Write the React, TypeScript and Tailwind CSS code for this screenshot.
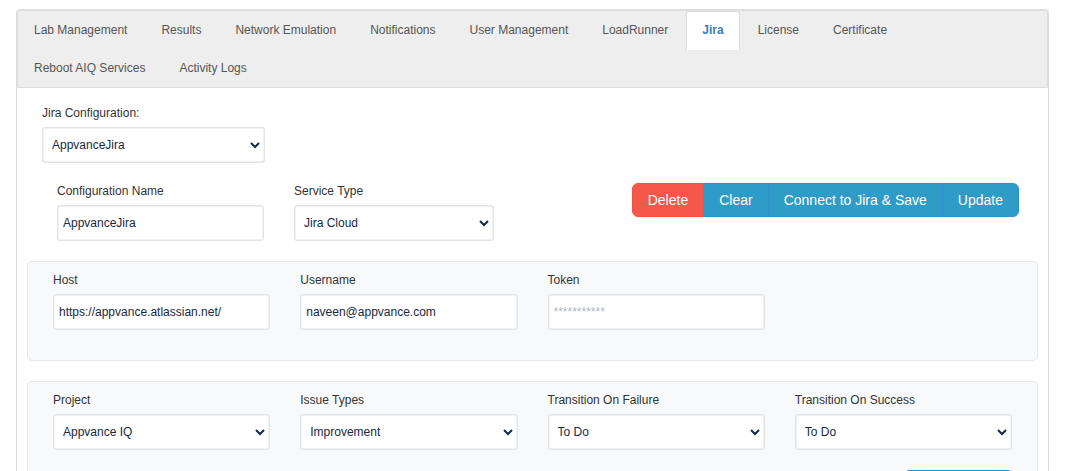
import { useId, type ReactNode } from "react";
import { clsx } from "clsx";

const tabs = [
  "Lab Management",
  "Results",
  "Network Emulation",
  "Notifications",
  "User Management",
  "LoadRunner",
  "Jira",
  "License",
  "Certificate",
  "Reboot AIQ Services",
  "Activity Logs",
];

const controlClass =
  "block h-9 w-full rounded-[3px] border-2 border-[#f1f2f2] bg-white px-1 text-xs text-[#17293f] outline-1 -outline-offset-1 outline-[#e3e4e5] placeholder:text-[#b3b8c2]";

interface FieldProps {
  label: string;
  className?: string;
}

interface TextFieldProps extends FieldProps {
  value?: string;
  placeholder?: string;
  type?: string;
}

function TextField({ label, value, placeholder, type = "text", className }: TextFieldProps) {
  const id = useId();

  return (
    <div className={className}>
      <label htmlFor={id} className="mb-1 block leading-5">
        {label}
      </label>
      <input
        id={id}
        type={type}
        defaultValue={value}
        placeholder={placeholder}
        className={controlClass}
      />
    </div>
  );
}

interface SelectFieldProps extends FieldProps {
  options: string[];
}

function SelectField({ label, options, className }: SelectFieldProps) {
  const id = useId();

  return (
    <div className={className}>
      <label htmlFor={id} className="mb-1 block leading-5">
        {label}
      </label>
      <select id={id} className={controlClass}>
        {options.map((option) => (
          <option key={option}>{option}</option>
        ))}
      </select>
    </div>
  );
}

function Panel({ children }: { children: ReactNode }) {
  return (
    <section className="mt-5 rounded-[5px] border border-[#e6e8ea] bg-[#f8f9fb] px-[25px] pt-2 pb-[30px]">
      {children}
    </section>
  );
}

const actions = ["Delete", "Clear", "Connect to Jira & Save", "Update"];

export default function App() {
  return (
    <div className="h-screen overflow-hidden bg-white pt-[9px] pr-[31px] pl-4 font-['Liberation_Sans',Arial,sans-serif] text-xs text-[#333333]">
      <div className="min-h-screen rounded border border-[#dddddd]">
        <nav className="rounded-t-[3px] border border-[#dddddd] bg-[#eeeeee]">
          <ul className="-ml-px flex flex-wrap">
            {tabs.map((tab) => {
              const active = tab === "Jira";
              return (
                <li key={tab} className="h-[38px]">
                  <a
                    href="#"
                    aria-current={active ? "page" : undefined}
                    className={clsx(
                      "mx-px block border-x border-t px-[15px] leading-9",
                      active
                        ? "h-[39px] rounded-t-[3px] border-[#dddddd] bg-white font-bold text-[#3d7fb5]"
                        : "border-transparent text-[#555555]"
                    )}
                  >
                    {tab}
                  </a>
                </li>
              );
            })}
          </ul>
        </nav>

        <main className="px-[10px] pt-[15px]">
          <SelectField
            label="Jira Configuration:"
            options={["AppvanceJira"]}
            className="ml-[15px] w-[223px]"
          />

          <div className="mt-[18px] flex items-start justify-between pr-[19px] pl-[30px]">
            <div className="flex gap-[30px]">
              <TextField label="Configuration Name" value="AppvanceJira" className="w-[207px]" />
              <SelectField
                label="Service Type"
                options={["Jira Cloud", "Jira Server"]}
                className="w-[200px]"
              />
            </div>
            <div className="flex pt-0.5 text-sm text-white">
              {actions.map((action) => (
                <button
                  key={action}
                  type="button"
                  className={clsx(
                    "-ml-px h-[34px] border px-[15px] first:rounded-l-md last:rounded-r-md",
                    action === "Delete"
                      ? "border-[#f54e42] bg-[#f6574b]"
                      : "border-[#2f90d0] bg-[#2f9bc7]",
                    action === "Clear" && "border-l-[#2f9bc7]"
                  )}
                >
                  {action}
                </button>
              ))}
            </div>
          </div>

          <Panel>
            <div className="grid grid-cols-4 gap-[30px]">
              <TextField label="Host" value="https://appvance.atlassian.net/" />
              <TextField label="Username" value="naveen@appvance.com" />
              <TextField label="Token" type="password" placeholder="***********" />
            </div>
          </Panel>

          <Panel>
            <div className="grid grid-cols-4 gap-[30px]">
              <SelectField label="Project" options={["Appvance IQ"]} />
              <SelectField label="Issue Types" options={["Improvement"]} />
              <SelectField label="Transition On Failure" options={["To Do"]} />
              <SelectField label="Transition On Success" options={["To Do"]} />
            </div>
            <div className="mt-5 flex justify-end">
              <button
                type="button"
                aria-label="Save"
                className="h-[34px] w-[107px] rounded border border-[#2f90d0] bg-[#2f9bc7]"
              />
            </div>
          </Panel>
        </main>
      </div>
    </div>
  );
}
